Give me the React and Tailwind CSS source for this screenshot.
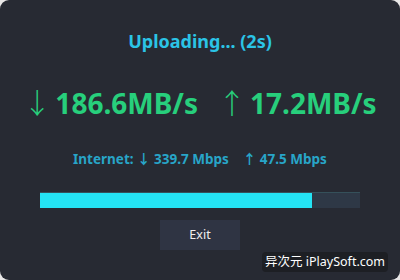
export default function App() {
    return (
        <div className="h-[280px] w-[400px] bg-[#e9e7e7]" style={{ fontFamily: '"Noto Sans", "Noto Sans CJK SC", sans-serif' }}>
            <div className="relative flex h-full w-full flex-col items-center rounded-[9px] bg-[#272a33]">
                <h1 className="mt-[29px] text-[18px] font-bold leading-[24px] text-[#2bc4e6]">Uploading... (2s)</h1>

                <div className="mt-[30px] flex items-center gap-[20px] text-[28px] font-bold leading-[40px] text-[#27cf7c]">
                    <span>
                        <span className="mr-[4px] font-light">↓</span>186.6MB/s
                    </span>
                    <span>
                        <span className="mr-[4px] font-light">↑</span>17.2MB/s
                    </span>
                </div>

                <div className="mt-[27px] flex gap-[14px] text-[13.5px] font-bold leading-[18px] text-[#28a5c8]">
                    <span>Internet: ↓ 339.7 Mbps</span>
                    <span>↑ 47.5 Mbps</span>
                </div>

                <div className="mt-[24px] h-[16px] w-[320px] border-t border-[#35505a] bg-[#2e3846]">
                    <div className="h-full w-[272px] bg-[#24e3f4]" />
                </div>

                <button className="mt-[12px] h-[30px] w-[80px] bg-[#2f3443] text-[12.5px] text-[#f1eeee]">Exit</button>

                <div className="absolute bottom-[8px] right-[12px] rounded-[4px] bg-[#1d1f24] px-[3px] text-[12.5px] leading-[20px] text-white">
                    异次元 iPlaySoft.com
                </div>
            </div>
        </div>
    );
}
